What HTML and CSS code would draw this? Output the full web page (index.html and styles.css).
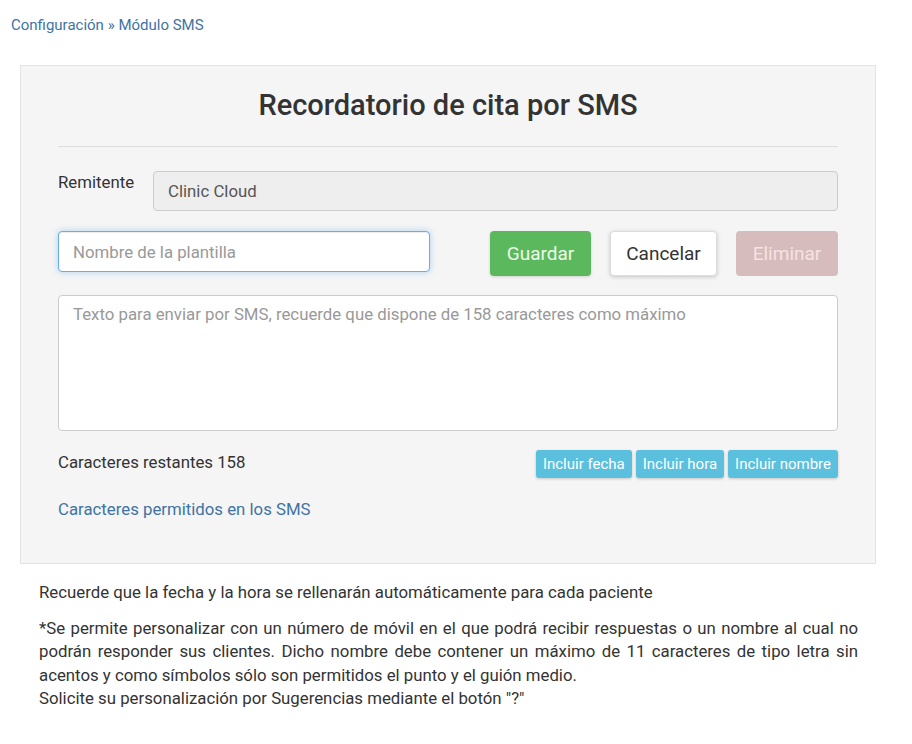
FILE: index.html
```html
<!DOCTYPE html>
<html lang="es">
<head>
    <meta charset="UTF-8">
    <meta name="viewport" content="width=device-width, initial-scale=1.0">
    <title>Módulo SMS</title>
    <link rel="stylesheet" href="styles.css">
</head>
<body>

    <div class="breadcrumb">
        <a href="javascript:void(0);">Configuración</a> » <a href="javascript:void(0);">Módulo SMS</a>
    </div>

    <div class="well">
        <h2>Recordatorio de cita por SMS</h2>
        <hr>
        <div class="row-sender">
            <label class="sender-label">Remitente</label>
            <input type="text" class="input-field disabled" value="Clinic Cloud" disabled>
        </div>
        <div class="row-template">
            <input type="text" class="input-field focused" placeholder="Nombre de la plantilla">
            <div class="actions">
                <button class="btn btn-save">Guardar</button>
                <button class="btn btn-cancel">Cancelar</button>
                <button class="btn btn-delete" disabled>Eliminar</button>
            </div>
        </div>
        <textarea class="input-field sms-text" placeholder="Texto para enviar por SMS, recuerde que dispone de 158 caracteres como máximo"></textarea>
        <div class="row-counter">
            <span>Caracteres restantes 158</span>
            <div class="tags">
                <button class="btn-tag">Incluir fecha</button>
                <button class="btn-tag">Incluir hora</button>
                <button class="btn-tag">Incluir nombre</button>
            </div>
        </div>
        <a class="allowed-link" href="javascript:void(0);">Caracteres permitidos en los SMS</a>
    </div>

    <div class="notes">
        <p>Recuerde que la fecha y la hora se rellenarán automáticamente para cada paciente</p>
        <p class="justify">*Se permite personalizar con un número de móvil en el que podrá recibir respuestas o un nombre al cual no podrán responder sus clientes. Dicho nombre debe contener un máximo de 11 caracteres de tipo letra sin acentos y como símbolos sólo son permitidos el punto y el guión medio.<br>Solicite su personalización por Sugerencias mediante el botón "?"</p>
    </div>

</body>
</html>
```

FILE: styles.css
```css
body {
    font-family: Roboto, "Liberation Sans", Arial, sans-serif;
    font-size: 16.8px;
    color: #333;
    margin: 0;
    background-color: #fff;
}

a {
    color: #3f73a3;
    text-decoration: none;
}

.breadcrumb {
    font-size: 15px;
    line-height: 20px;
    padding: 15px 11px 0;
    color: #3f73a3;
}

.well {
    width: 856px;
    box-sizing: border-box;
    margin: 30px 0 0 20px;
    padding: 0 37px 42px;
    background-color: #f5f5f5;
    border: 1px solid #e3e3e3;
}

h2 {
    margin: 20px 0 0;
    font-size: 29px;
    font-weight: 500;
    line-height: 38px;
    text-align: center;
    color: #333;
}

hr {
    margin: 22px 0 0;
    border: none;
    border-top: 1px solid #ddd;
}

.input-field {
    box-sizing: border-box;
    font-family: inherit;
    font-size: 16.8px;
    color: #555;
    background-color: #fff;
    border: 1px solid #ccc;
    border-radius: 4px;
    padding: 6px 14px;
    margin: 0;
}

.input-field::placeholder {
    color: #999;
}

.row-sender {
    display: flex;
    margin-top: 24px;
}

.sender-label {
    width: 95px;
    flex-shrink: 0;
    padding-top: 1px;
    line-height: 20px;
}

.row-sender .input-field {
    flex: 1;
    height: 40px;
}

.input-field.disabled {
    background-color: #eee;
    color: #555;
}

.row-template {
    display: flex;
    justify-content: space-between;
    align-items: flex-start;
    margin-top: 20px;
}

.input-field.focused {
    width: 372px;
    height: 41px;
    border-color: #66afe9;
    box-shadow: inset 0 1px 1px rgba(0, 0, 0, .075), 0 0 6px rgba(102, 175, 233, .5);
    outline: none;
}

.actions {
    display: flex;
    gap: 19px;
}

.btn {
    font-family: inherit;
    font-size: 19px;
    height: 45px;
    padding: 0;
    border-radius: 4px;
    border: 1px solid transparent;
    cursor: pointer;
}

.btn-save {
    width: 101px;
    background-color: #5cb85c;
    color: #eafaea;
    box-shadow: 0 1px 3px rgba(0, 0, 0, .15);
}

.btn-cancel {
    width: 107px;
    background-color: #fff;
    color: #333;
    border-color: #ddd;
    box-shadow: 0 1px 4px rgba(0, 0, 0, .2);
}

.btn-delete {
    width: 102px;
    background-color: #d6bcbc;
    color: #f7e2e2;
    cursor: not-allowed;
}

.sms-text {
    display: block;
    width: 100%;
    height: 136px;
    margin-top: 19px;
    resize: none;
    padding: 7px 14px;
    line-height: 22px;
}

.row-counter {
    display: flex;
    justify-content: space-between;
    align-items: flex-start;
    margin-top: 19px;
}

.row-counter span {
    line-height: 24px;
}

.tags {
    display: flex;
    gap: 4px;
}

.btn-tag {
    font-family: inherit;
    font-size: 15px;
    height: 28px;
    padding: 0 7px;
    border: none;
    border-radius: 3px;
    background-color: #5bc0de;
    color: #fff;
    box-shadow: 0 1px 3px rgba(0, 0, 0, .2);
    cursor: pointer;
}

.allowed-link {
    display: block;
    margin-top: 19px;
    line-height: 24px;
}

.notes {
    width: 819px;
    padding: 0 0 0 39px;
}

.notes p {
    margin: 17px 0 0;
    line-height: 23.5px;
}

.notes p + p {
    margin-top: 12px;
}

.justify {
    text-align: justify;
}
```
